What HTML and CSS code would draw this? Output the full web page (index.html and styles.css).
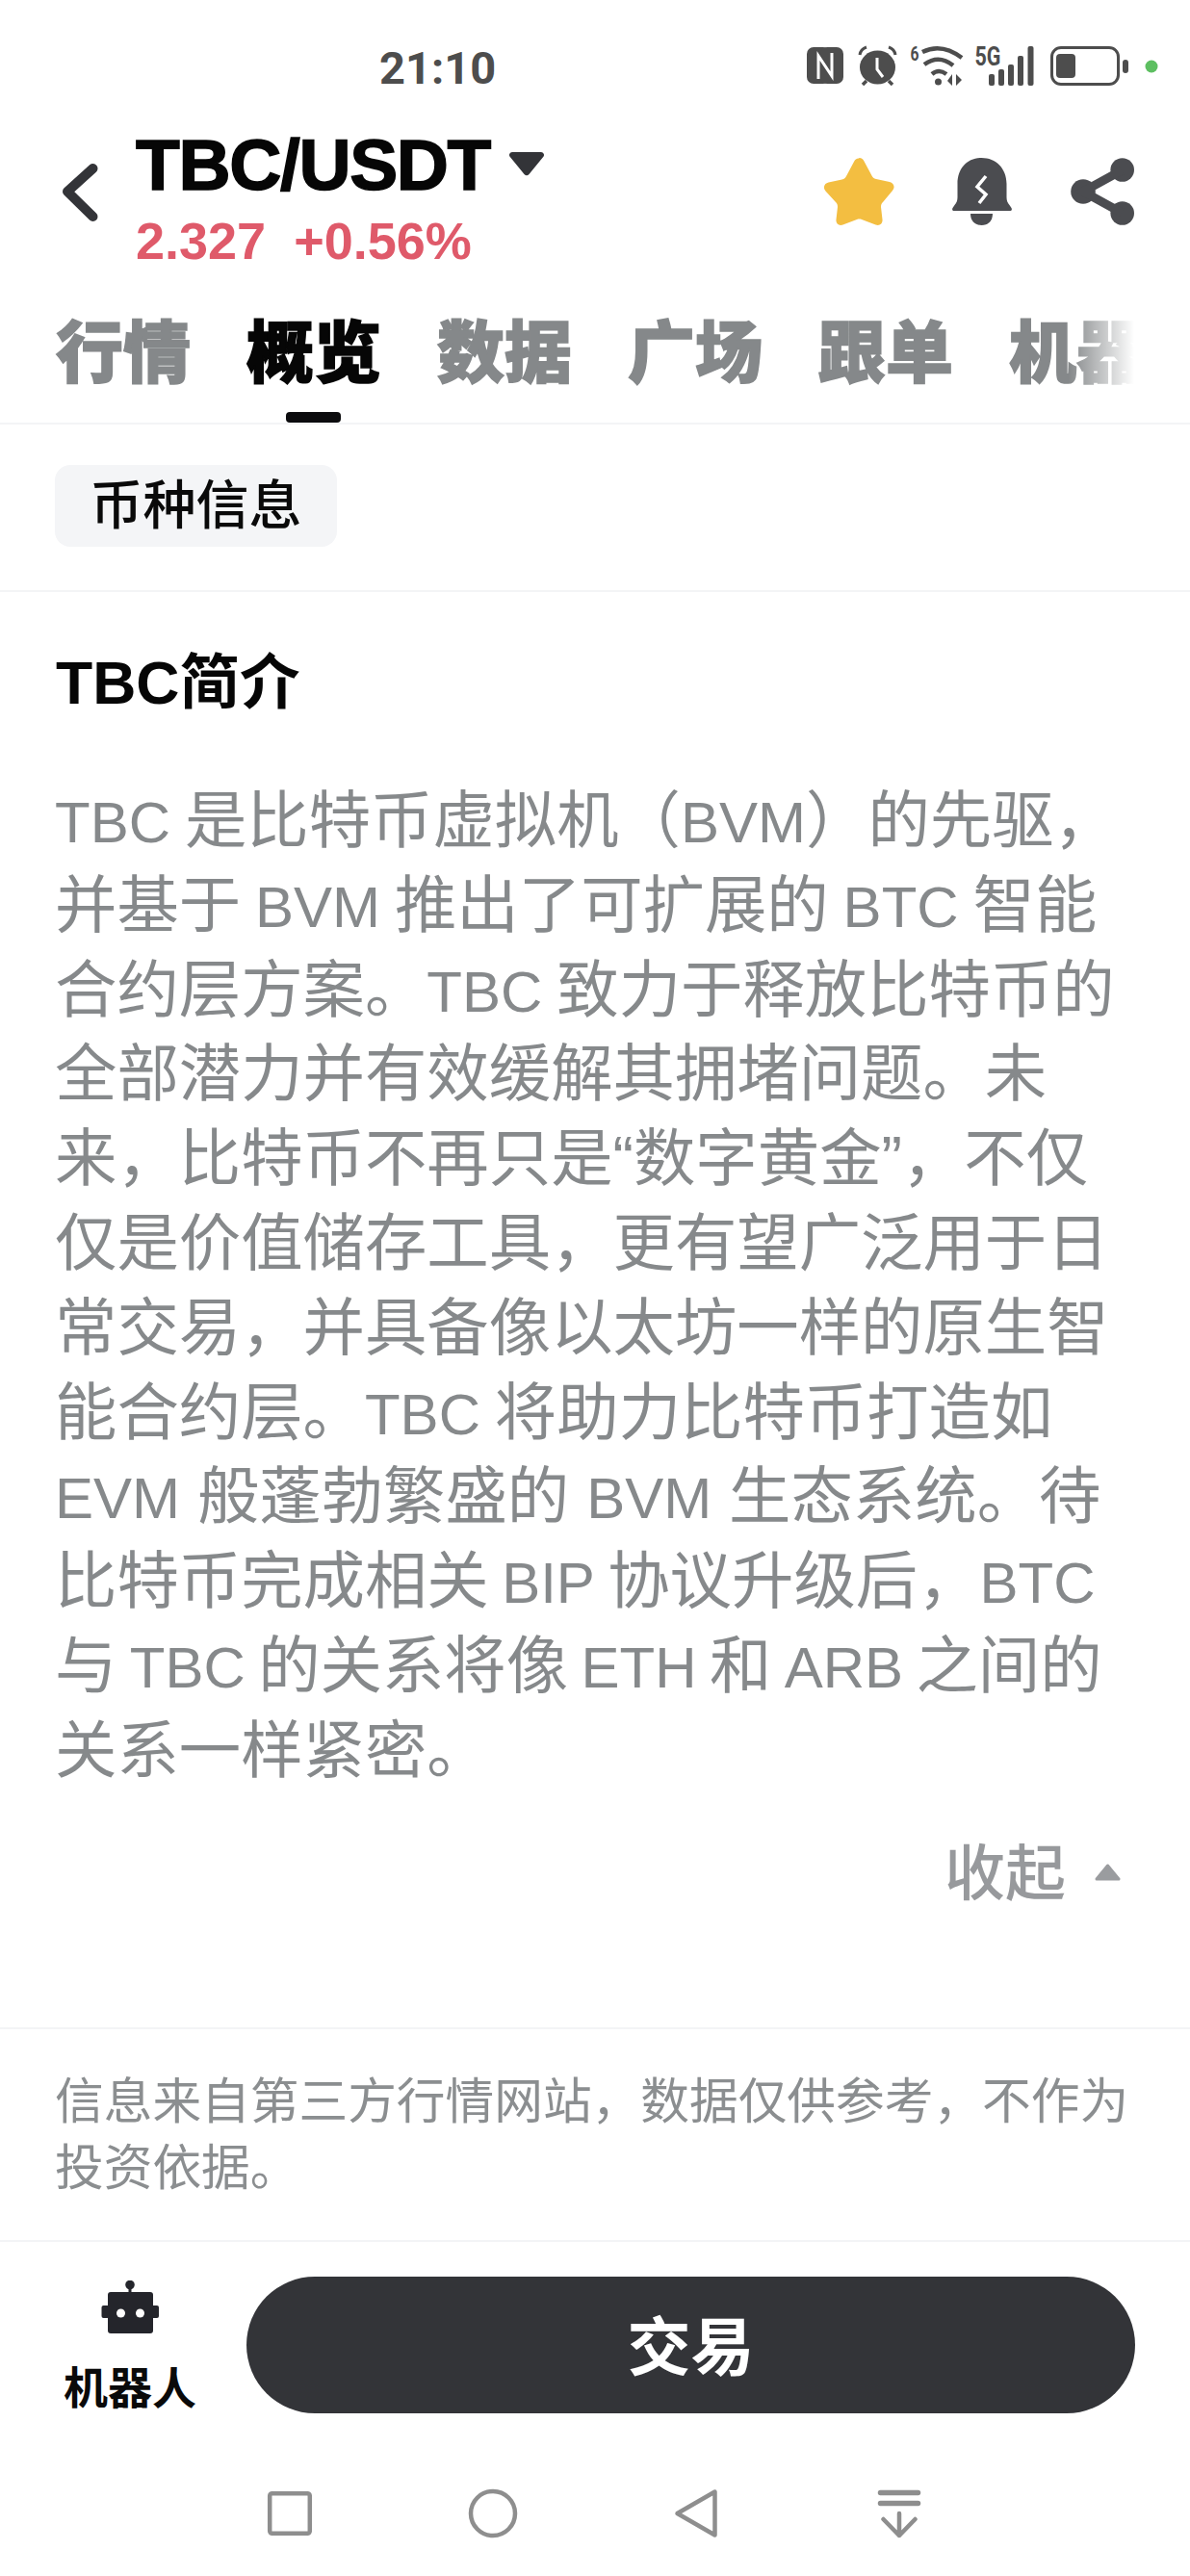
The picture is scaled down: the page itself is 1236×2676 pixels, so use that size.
FILE: index.html
```html
<!DOCTYPE html>
<html lang="zh-CN">
<head>
<meta charset="utf-8">
<title>TBC/USDT</title>
<link rel="stylesheet" href="styles.css">
</head>
<body>
<div class="page">
  <div class="status">
    <span class="clock">21:10</span>
    <svg class="status-icons" width="366" height="50" viewBox="838 40 366 50">
      <g fill="#4d4d4d">
        <rect x="838" y="49" width="24" height="38" rx="7"/>
        <rect x="852" y="49" width="24" height="38" rx="7"/>
      </g>
      <path d="M850 82V58l14 21V55" fill="none" stroke="#fff" stroke-width="3"/>
      <ellipse cx="911.5" cy="70" rx="18.5" ry="17.5" fill="#4d4d4d"/>
      <path d="M911 60v12l6 8" fill="none" stroke="#fff" stroke-width="3"/>
      <path d="M893 57q1-6 7-8M930 57q-1-6-7-8" fill="none" stroke="#4d4d4d" stroke-width="3"/>
      <path d="M900 84l-4 4M923 84l4 4" stroke="#4d4d4d" stroke-width="3.5"/>
      <text x="945.5" y="63" class="status-small" textLength="9" lengthAdjust="spacingAndGlyphs">6</text>
      <path d="M958 54q20-10 41 6M960 67q15-11 30 1M968 77q7-6 15 0" fill="none" stroke="#4d4d4d" stroke-width="4.5"/>
      <circle cx="974.5" cy="85" r="3.5" fill="#4d4d4d"/>
      <path d="M989 89V77l-5 7zM993 77v12l6-6z" fill="#4d4d4d"/>
      <text x="1012.5" y="68" class="status-5g" textLength="27" lengthAdjust="spacingAndGlyphs">5G</text>
      <g fill="#4d4d4d">
        <rect x="1027" y="77" width="6" height="12" rx="2"/>
        <rect x="1037" y="72" width="6" height="17" rx="2"/>
        <rect x="1047" y="67" width="6" height="22" rx="2"/>
        <rect x="1057" y="58" width="6" height="31" rx="2"/>
        <rect x="1067.500" y="48" width="6" height="41" rx="2"/>
        <rect x="1097" y="56" width="20" height="25" rx="4"/>
        <rect x="1166" y="62" width="6" height="14" rx="3"/>
      </g>
      <rect x="1092.500" y="49.500" width="69" height="38" rx="9.500" fill="none" stroke="#4d4d4d" stroke-width="3"/>
      <circle cx="1196" cy="69" r="6.500" fill="#5dbf61"/>
    </svg>
  </div>

  <header class="head">
    <svg class="back" width="44" height="64" viewBox="62 168 44 64"><path d="M96.500 175L70 199l26.500 26" fill="none" stroke="#333438" stroke-width="10" stroke-linecap="round" stroke-linejoin="round"/></svg>
    <div class="pair">
      <div class="pair-title">
        <span class="symbol">TBC/USDT</span>
        <svg class="caret" width="36" height="25" viewBox="0 0 36 25"><path d="M3 0h30a3 3 0 0 1 2.200 5L20.500 23a3.500 3.500 0 0 1-5 0L.8 5A3 3 0 0 1 3 0z" fill="#333438"/></svg>
      </div>
      <div class="pair-price"><span>2.327</span><span>+0.56%</span></div>
    </div>
    <div class="actions">
      <svg width="73" height="70" viewBox="0 0 73 70"><path d="M36.500 0c2.500 0 4 1.500 5 3.500l8 15c1 2 2 3 4.500 3.500l14 3c4.500 1 6 5.500 3 9L61 46c-1.500 1.500-2 2.500-2 5l1.500 13c.5 4.500-3 7-7 5.500l-14.500-5.500c-1.500-.6-3.500-.6-5 0L19.500 69.500c-4 1.500-7.500-1-7-5.500L14 51c0-2.500-.5-3.500-2-5L1.500 34.500c-3-3.500-1.500-8 3-9l14-3c2.500-.5 3.500-1.500 4.500-3.500l8-15c1-2 2.500-3.500 5-3.500z" fill="#f3be41"/></svg>
      <svg width="65" height="70" viewBox="988 164 65 70">
        <path d="M1019.500 164c-15 0-25 11-25 27v14c0 3-1 6-3 8l-2 3c-1 2 0 3 2 3h57c2 0 3-1 2-3l-2-3c-2-2-3-5-3-8v-14c0-16-11-27-26-27z" fill="#4b4c50"/>
        <path d="M1008 222h23c0 8-5 12-11.500 12s-11.500-4-11.500-12z" fill="#4b4c50"/>
        <path d="M1024 183l-9 11 9 8-7 9" fill="none" stroke="#fff" stroke-width="3.500"/>
      </svg>
      <svg width="66" height="70" viewBox="1112 164 66 70">
        <g fill="#4b4c50"><circle cx="1165.700" cy="176.500" r="12.300"/><circle cx="1125" cy="199" r="12.800"/><circle cx="1165.700" cy="221.500" r="12.300"/></g>
        <path d="M1165 177l-40 22 40 22" fill="none" stroke="#4b4c50" stroke-width="9"/>
      </svg>
    </div>
  </header>

  <nav class="tabs">
    <span class="tab">行情</span>
    <span class="tab tab-on">概览</span>
    <span class="tab">数据</span>
    <span class="tab">广场</span>
    <span class="tab">跟单</span>
    <span class="tab">机器</span>
    <span class="tab-fade"></span>
  </nav>

  <section class="chips"><span class="chip">币种信息</span></section>

  <section class="intro">
    <h1 class="intro-title">TBC简介</h1>
    <p class="intro-text"><span class="en">TBC</span> 是比特币虚拟机（<span class="en">BVM</span>）的先驱，<br>并基于 <span class="en">BVM</span> 推出了可扩展的 <span class="en">BTC</span> 智能<br>合约层方案。<span class="en">TBC</span> 致力于释放比特币的<br>全部潜力并有效缓解其拥堵问题。未<br>来，比特币不再只是“数字黄金”，不仅<br>仅是价值储存工具，更有望广泛用于日<br>常交易，并具备像以太坊一样的原生智<br>能合约层。<span class="en">TBC</span> 将助力比特币打造如<br><span class="wide"><span class="en">EVM</span> 般蓬勃繁盛的 <span class="en">BVM</span> 生态系统。待</span><br><span class="tight">比特币完成相关 <span class="en">BIP</span> 协议升级后，<span class="en">BTC</span></span><br><span class="tight">与 <span class="en">TBC</span> 的关系将像 <span class="en">ETH</span> 和 <span class="en">ARB</span> 之间的</span><br>关系一样紧密。</p>
    <div class="collapse"><span>收起</span><svg width="27" height="18" viewBox="0 0 27 18"><path d="M13.500 2L25 16H2z" fill="#9a9c9f" stroke="#9a9c9f" stroke-width="3" stroke-linejoin="round"/></svg></div>
  </section>

  <section class="note">信息来自第三方行情网站，数据仅供参考，不作为<br>投资依据。</section>

  <footer class="bar">
    <div class="robot">
      <svg width="60" height="56" viewBox="104 2369 60 56">
        <g fill="#24252b">
          <circle cx="134" cy="2373.500" r="4.800"/>
          <rect x="132.500" y="2376" width="3" height="6"/>
          <rect x="111" y="2381" width="47" height="43" rx="3"/>
          <rect x="104.500" y="2395" width="8" height="13" rx="2"/>
          <rect x="156" y="2395" width="8" height="13" rx="2"/>
        </g>
        <circle cx="124.500" cy="2403" r="4.500" fill="#fff"/>
        <circle cx="144.500" cy="2403" r="4.500" fill="#fff"/>
      </svg>
      <span class="robot-label">机器人</span>
    </div>
    <button class="trade">交易</button>
  </footer>

  <div class="sysnav">
    <svg width="52" height="52" viewBox="0 0 52 52"><rect x="5.200" y="5.200" width="41.600" height="41.600" rx="2.500" fill="none" stroke="#8e8e8e" stroke-width="4.500"/></svg>
    <svg width="52" height="52" viewBox="0 0 52 52"><circle cx="26" cy="26" r="23" fill="none" stroke="#8e8e8e" stroke-width="4.500"/></svg>
    <svg width="52" height="52" viewBox="0 0 52 52"><path d="M45.500 3.500v45L6.500 26z" fill="none" stroke="#8e8e8e" stroke-width="4.500" stroke-linejoin="round"/></svg>
    <svg width="52" height="52" viewBox="0 0 52 52"><path d="M6.500 4.500h39M6.500 15.500h39" stroke="#8e8e8e" stroke-width="5.500" stroke-linecap="round"/><path d="M26 26v23M9.500 32L26 49l16.500-17" fill="none" stroke="#8e8e8e" stroke-width="4.500" stroke-linecap="round" stroke-linejoin="round"/></svg>
  </div>
</div>
</body>
</html>
```

FILE: styles.css
```css
* { box-sizing: border-box; }
html, body { margin: 0; padding: 0; background: #fff; }
body { font-family: "Liberation Sans", "Noto Sans CJK SC", sans-serif; }
.page { width: 1236px; height: 2676px; display: flex; flex-direction: column; overflow: hidden; }

.status { height: 124px; padding: 46px 32px 0 394px; display: flex; align-items: flex-start; }
.clock { font: 700 47px/50px Roboto, sans-serif; color: #4d4d4d; }
.status-icons { display: block; margin: -6px 0 0 auto; }
.status-small, .status-5g { font-family: Roboto, sans-serif; font-weight: 700; fill: #4d4d4d; }
.status-small { font-size: 21px; }
.status-5g { font-size: 27px; }

.head { height: 168px; display: flex; align-items: flex-start; padding: 0 58px 0 62px; }
.back { display: block; margin-top: 44px; flex: none; }
.pair { margin: 9px 0 0 35px; }
.pair-title { display: flex; align-items: flex-start; }
.symbol { font: 700 75px/76px "Liberation Sans", sans-serif; color: #060606; letter-spacing: -1.4px; -webkit-text-stroke: 1.5px #060606; }
.caret { display: block; margin: 25px 0 0 20px; }
.pair-price { display: flex; gap: 29px; font: 700 54px/60px "Liberation Sans", sans-serif; color: #df5a6a; margin-top: 11px; }
.actions { margin-left: auto; margin-top: 40px; display: flex; gap: 59px; }
.actions svg { display: block; }

.tabs { height: 149px; padding: 0 0 0 58px; display: flex; gap: 58px; position: relative; border-bottom: 2px solid #f3f4f6; }
.tab { font: 900 70px/100px "Noto Sans CJK SC", sans-serif; color: #85888a; white-space: nowrap; padding-top: 20px; position: relative; -webkit-text-stroke: 1.5px #85888a; }
.tab-on { color: #060606; -webkit-text-stroke-color: #060606; }
.tab-on::after { content: ""; position: absolute; left: 41px; top: 136px; width: 57px; height: 11px; border-radius: 4px; background: #0c0c0e; }
.tab-fade { position: absolute; right: 0; top: 0; bottom: 0; width: 126px; background: linear-gradient(90deg, rgba(255,255,255,0), #fff 54%); }

.chips { height: 174px; padding: 42px 0 0 57px; border-bottom: 2px solid #f3f4f6; }
.chip { display: block; width: 293px; height: 85px; border-radius: 16px; background: #f4f5f7; font: 500 55px/75px "Noto Sans CJK SC", sans-serif; color: #0a0a0a; text-align: center; }

.intro { height: 1493px; padding: 54px 0 0 58px; border-bottom: 2px solid #f3f4f6; }
.intro-title { margin: 0; font: 700 62.500px/80px "Liberation Sans", "Noto Sans CJK SC", sans-serif; color: #060606; }
.intro-text { margin: 61px 0 0 -1px; font: 400 64.400px/87.800px "Liberation Sans", "Noto Sans CJK SC", sans-serif; color: #86898b; white-space: nowrap; word-spacing: -3px; }
.en { font-size: 60px; line-height: 0; }
.wide { word-spacing: 0; }
.tight { word-spacing: -4.500px; }
.collapse { margin-top: 37px; display: flex; justify-content: flex-end; align-items: center; gap: 30px; padding-right: 72px; font: 500 63px/80px "Noto Sans CJK SC", sans-serif; color: #97999c; }
.collapse svg { display: block; margin-top: 8px; }

.note { height: 221px; padding: 37px 0 0 57px; border-bottom: 2px solid #f3f4f6; font: 400 50.700px/69px "Noto Sans CJK SC", sans-serif; color: #8b8e90; white-space: nowrap; }

.bar { height: 231px; display: flex; padding-top: 36px; }
.robot { width: 256px; flex: none; display: flex; flex-direction: column; align-items: center; padding: 4px 0 0 14px; }
.robot svg { display: block; }
.robot-label { font: 700 46px/56px "Noto Sans CJK SC", sans-serif; color: #0a0a0a; margin-top: 24px; }
.trade { width: 923px; height: 142px; border: 0; border-radius: 71px; background: #333438; color: #fff; font: 700 66px/128px "Noto Sans CJK SC", sans-serif; padding: 0 0 7px; }

.sysnav { display: flex; align-items: flex-start; padding: 25px 0 0 275px; gap: 159px; height: 116px; }
.sysnav svg { display: block; }
```
